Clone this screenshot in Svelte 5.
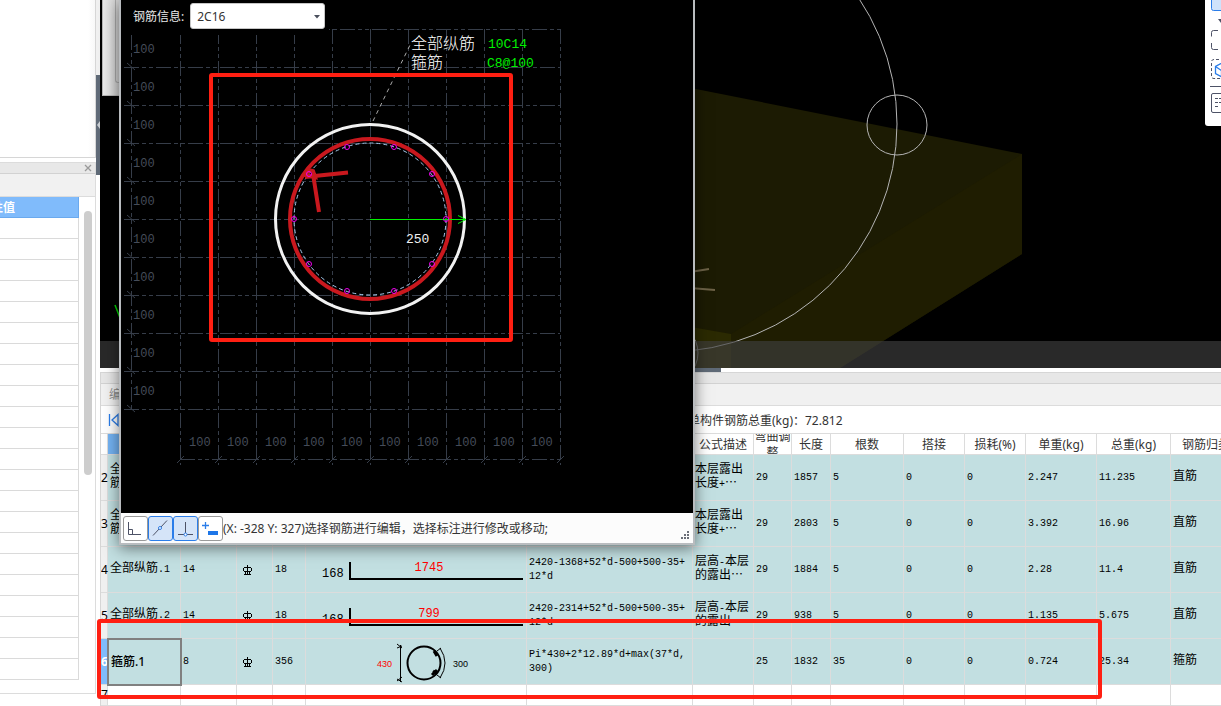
<script>
  const steps = Array.from({ length: 11 }, (_, i) => i);
  const bars = Array.from({ length: 10 }, (_, i) => {
    const a = (i * Math.PI) / 5;
    return { x: Math.round(370.4 + 76 * Math.cos(a)), y: Math.round(219 + 76 * Math.sin(a)) };
  });
  const propertyRows = Array.from({ length: 22 }, (_, i) => i);

  const columns = [
    { key: 'name', label: '', width: 73 },
    { key: 'dia', label: '', width: 56 },
    { key: 'grade', label: '', width: 36 },
    { key: 'shapeNo', label: '', width: 33 },
    { key: 'shape', label: '', width: 221 },
    { key: 'formula', label: '', width: 166 },
    { key: 'note', label: '公式描述', width: 61 },
    { key: 'bend', label: '弯曲调整', width: 38 },
    { key: 'length', label: '长度', width: 39 },
    { key: 'count', label: '根数', width: 73 },
    { key: 'lap', label: '搭接', width: 61 },
    { key: 'loss', label: '损耗(%)', width: 61 },
    { key: 'unit', label: '单重(kg)', width: 71 },
    { key: 'total', label: '总重(kg)', width: 74 },
    { key: 'kind', label: '钢筋归类', width: null }
  ];

  const rows = [
    { no: 2, name: '全部纵筋插筋.1', note: '本层露出长度+⋯', bend: '29', length: '1857', count: '5', lap: '0', loss: '0', unit: '2.247', total: '11.235', kind: '直筋' },
    { no: 3, name: '全部纵筋插筋.2', note: '本层露出长度+⋯', bend: '29', length: '2803', count: '5', lap: '0', loss: '0', unit: '3.392', total: '16.96', kind: '直筋' },
    { no: 4, name: '全部纵筋.1', dia: '14', grade: 'C', shapeNo: '18', shape: { hook: '168', run: '1745' }, formula: '2420-1368+52*d-500+500-35+12*d', note: '层高-本层的露出⋯', bend: '29', length: '1884', count: '5', lap: '0', loss: '0', unit: '2.28', total: '11.4', kind: '直筋' },
    { no: 5, name: '全部纵筋.2', dia: '14', grade: 'C', shapeNo: '18', shape: { hook: '168', run: '799' }, formula: '2420-2314+52*d-500+500-35+12*d', note: '层高-本层的露出⋯', bend: '29', length: '938', count: '5', lap: '0', loss: '0', unit: '1.135', total: '5.675', kind: '直筋' },
    { no: 6, selected: true, name: '箍筋.1', dia: '8', grade: 'C', shapeNo: '356', shape: { ring: '430', lap: '300' }, formula: 'Pi*430+2*12.89*d+max(37*d,300)', note: '', bend: '25', length: '1832', count: '35', lap: '0', loss: '0', unit: '0.724', total: '25.34', kind: '箍筋' }
  ];

  function split(text) {
    return (text ?? '').match(/[\u2e80-\uffef⋯]+|[^\u2e80-\uffef⋯]+/g) ?? [];
  }
</script>

{#snippet mixed(text)}
  {#each split(text) as part}<span class={/[\u2e80-\uffef⋯]/.test(part) ? 'cn' : 'mono'}>{part}</span>{/each}
{/snippet}

<div class="app">
  <aside class="side">
    <div class="preview"></div>
    <section class="props">
      <header class="props-head">
        <button class="close" aria-label="关闭">
          <svg width="8" height="8" viewBox="0 0 8 8"><path d="M1 1l6 6M7 1l-6 6" stroke="#9a9a9a" stroke-width="1.3" /></svg>
        </button>
      </header>
      <div class="props-tabs"></div>
      <div class="props-body">
        <div class="props-list">
          <div class="props-title"><span>性值</span></div>
          {#each propertyRows as r (r)}<div class="props-row"></div>{/each}
        </div>
        <div class="scroll"><div class="thumb"></div></div>
      </div>
    </section>
  </aside>

  <div class="vsplit">
    <div class="handle">
      <svg width="4" height="8" viewBox="0 0 4 8"><path d="M4 0v8L1 4z" fill="#c9ced3" /></svg>
    </div>
  </div>

  <main class="work">
    <div class="view">
      <svg class="scene" width="1121" height="368" viewBox="100 0 1121 368">
        <path d="M560 62L1022 154V254L840 368H560z" fill="#1c1b03" />
        <path d="M1022 154V254L840 368H731V334z" fill="#1f1d01" />
        <path d="M600 311L731 334V368H600z" fill="#2b2a02" />
        <ellipse cx="667" cy="124" rx="230" ry="228" fill="none" stroke="#b4b4b4" />
        <circle cx="897" cy="125" r="30" fill="none" stroke="#b4b4b4" />
        <circle cx="668" cy="353" r="30" fill="none" stroke="#b4b4b4" />
        <path d="M690 272L709 269M690 288L715 290" stroke="#6d6247" stroke-width="2" />
        <path d="M115 305l7 18" stroke="#00d800" stroke-width="1.5" />
        <rect x="100" y="341" width="1121" height="27" fill="#3f3f3f" fill-opacity="0.65" />
      </svg>
      <div class="back-panel"><div></div></div>
      <div class="palette">
        <svg width="16" height="126" viewBox="1205 0 16 126" fill="none">
          <path d="M1211.500 -2V8.500Q1211.500 10.500 1213.500 10.500H1224V-2z" fill="#cfe2fb" stroke="#2b7de9" />
          <path d="M1218 19h6l-3 4z" fill="#4d5266" />
          <path d="M1218 30.500h-4.500q-2 0-2 2v4M1211.500 43v4.500q0 2 2 2h4.500" stroke="#4d5266" />
          <path d="M1224 59.500h-10q-2.500 0-2.500 2.500v14q0 2.500 2.500 2.500h10" stroke="#4d5266" stroke-dasharray="3 2" />
          <path d="M1224 62l-8.500 4.500v7l8.500 4.500M1215.500 66.500l6 4V77" stroke="#2b7de9" stroke-width="1.300" />
          <path d="M1210 86.500h12" stroke="#4d5266" />
          <path d="M1224 93.500h-11q-1.500 0-1.500 1.500v16q0 1.500 1.500 1.500h11" stroke="#4d5266" />
          <path d="M1215 98.500h3M1219 98.500h3M1215 102.500h3M1219 102.500h3M1215 106.500h3" stroke="#4d5266" />
        </svg>
      </div>
    </div>

    <div class="hsplit"><div></div></div>

    <section class="editor">
      <div class="editor-head"></div>
      <div class="editor-tab">编辑钢筋</div>
      <div class="editor-tools">
        <button class="first" aria-label="第一条">
          <svg width="12" height="14" viewBox="0 0 12 14" fill="none" stroke="#2b7de9" stroke-width="1.300"><path d="M1.500 1v12M10 1.500L4 7l6 5.500z" /></svg>
        </button>
        <span class="sum">单构件钢筋总重(kg)：72.812</span>
      </div>
      <div class="table-wrap">
        <table>
          <colgroup>
            <col style:width="7px" />
            {#each columns as c (c.key)}<col style:width={c.width ? c.width + 'px' : 'auto'} />{/each}
          </colgroup>
          <thead>
            <tr>
              <th></th>
              {#each columns as c (c.key)}
                <th class={{ active: c.key === 'name' }}><div class="th">{c.label}</div></th>
              {/each}
            </tr>
          </thead>
          <tbody>
            {#each rows as r (r.no)}
              <tr class={{ selected: r.selected }}>
                <th scope="row"><span>{r.no}</span></th>
                {#each columns as c (c.key)}
                  {#if c.key === 'grade'}
                    <td class="mid">
                      {#if r.grade}
                        <svg width="11" height="10" viewBox="0 0 11 10" fill="none" stroke="#000"><path d="M5.500 0v10M2 2.500h7M2 6.500h7M1.500 3v3M9.500 3v3M3.500 6v3M7.500 6v3M2 9.500h7" /></svg>
                      {/if}
                    </td>
                  {:else if c.key === 'shape'}
                    <td class="shape">
                      {#if r.shape?.hook}
                        <svg width="220" height="45" viewBox="306 547 220 45">
                          <path d="M350 562V579H523" fill="none" stroke="#000" stroke-width="2" />
                          <text class="dim" x="322" y="577">{r.shape.hook}</text>
                          <text class="dim red" x="429" y="571" text-anchor="middle">{r.shape.run}</text>
                        </svg>
                      {:else if r.shape?.ring}
                        <svg width="220" height="45" viewBox="306 639 220 45" fill="none" stroke="#000">
                          <path d="M400.500 645V682M397 644l5 4M397 648l5-2M397 679l5 3M397 681l5-4" />
                          <circle cx="424" cy="663" r="16.500" stroke-width="2" />
                          <path d="M434 651l3 5M433 671l4 3M432 675l5-5" stroke-width="3" />
                          <path d="M437 651l4-3M437 675l4 3M440 648q10 15 0 30" />
                          <text class="tiny red" x="377" y="667">{r.shape.ring}</text>
                          <text class="tiny" x="453" y="667">{r.shape.lap}</text>
                        </svg>
                      {/if}
                    </td>
                  {:else if c.key === 'name' && r.selected}
                    <td class="current">{r.name}</td>
                  {:else}
                    <td>{@render mixed(r[c.key])}</td>
                  {/if}
                {/each}
              </tr>
            {/each}
            <tr class="blank">
              <th scope="row"><span>7</span></th>
              {#each columns as c (c.key)}<td></td>{/each}
            </tr>
          </tbody>
        </table>
      </div>
    </section>
  </main>

  <section class="dialog">
    <div class="canvas">
      <svg width="572" height="513" viewBox="121 0 572 513" fill="none">
        <g stroke="#363d49" stroke-dasharray="15 3 4 3 4 3">
          {#each steps as i (i)}
            <path d="M{180.5 + 38 * i} 29V465" />
            <path d="M{i ? 124 : 180} {29.5 + 38 * i}H560" />
          {/each}
          <path d="M131.500 35V409M180 459.500H560" />
        </g>
        <g stroke="#363d49">
          {#each steps as i (i)}
            <path d="M{177 + 38 * i} 463l7-7" />
            {#if i}<path d="M127 {25 + 38 * i}l8 7" />{/if}
          {/each}
        </g>
        <g class="ruler">
          {#each steps.slice(0, 10) as i (i)}
            <text x="133" y={53 + 38 * i}>100</text>
            <text x={189 + 38 * i} y="446">100</text>
          {/each}
        </g>
        <path d="M373 121L411 43" stroke="#aaa" stroke-dasharray="4 4" />
        <circle cx="370" cy="219" r="94.500" stroke="#f2f2f2" stroke-width="3" />
        <circle cx="370" cy="219" r="76" stroke="#a9cdf0" stroke-dasharray="4 3" />
        <circle cx="370" cy="219" r="80" stroke="#c9181e" stroke-width="4" />
        <path d="M305 175q3-6 8-4l2 6zM305 177L348 172.500M313 174L319 212" stroke="#c9181e" stroke-width="4" />
        <path d="M370 219.500H465M458 215.500l8 4l-8 4" stroke="#00f000" />
        {#each bars as b}
          <circle cx={b.x} cy={b.y} r="2.500" stroke="#f000f0" />
        {/each}
        <text class="label white" x="406" y="243">250</text>
        <text class="label-cn" x="411" y="49">全部纵筋</text>
        <text class="label-cn" x="411" y="68">箍筋</text>
        <text class="label green" x="488" y="48">10C14</text>
        <text class="label green" x="487" y="67">C8@100</text>
      </svg>
      <div class="info">
        <label for="rebar">钢筋信息:</label>
        <div class="combo">
          <select id="rebar"><option>2C16</option></select>
          <svg width="6" height="4" viewBox="0 0 6 4"><path d="M0 0h6L3 3.500z" fill="#4a4f5c" /></svg>
        </div>
      </div>
    </div>
    <footer class="status">
      <button aria-label="正交">
        <svg width="23" height="23" viewBox="0 0 23 23" fill="none" stroke="#4d5266"><path d="M4.500 5v12.500H17M4.500 12.500h4v5" /></svg>
      </button>
      <button class="on" aria-label="中点">
        <svg width="23" height="23" viewBox="0 0 23 23" fill="none"><path d="M4 18.500L18 3.500" stroke="#4d5266" /><circle cx="11" cy="11" r="1.500" fill="#fff" stroke="#2b7de9" /></svg>
      </button>
      <button class="on" aria-label="垂点">
        <svg width="23" height="23" viewBox="0 0 23 23" fill="none"><path d="M11.500 5v12M4 17.500h15" stroke="#4d5266" /><circle cx="11.500" cy="17.500" r="1.500" fill="#fff" stroke="#2b7de9" /></svg>
      </button>
      <button aria-label="动态输入">
        <svg width="23" height="23" viewBox="0 0 23 23" fill="none"><path d="M3 8.500h7M6.500 5v7" stroke="#2b7de9" stroke-width="1.300" /><rect x="9" y="14" width="10" height="4" fill="#1d76e8" /></svg>
      </button>
      <span>(X: -328 Y: 327)选择钢筋进行编辑，选择标注进行修改或移动;</span>
      <svg class="grip" width="9" height="9" viewBox="0 0 9 9" fill="#6b6f78"><path d="M6 0h2v2H6zM3 3h2v2H3zM6 3h2v2H6zM0 6h2v2H0zM3 6h2v2H3zM6 6h2v2H6z" /></svg>
    </footer>
  </section>

  <div class="mark mark-section"></div>
  <div class="mark mark-row"></div>
</div>

<style>
  :global(body) {
    overflow: hidden;
  }
  .app {
    position: relative;
    display: grid;
    grid-template-columns: 96px 4px 1fr;
    height: 100vh;
    overflow: hidden;
    background: #fff;
    color: #333;
    font: 12px/16px 'Noto Sans', 'Noto Sans CJK SC', sans-serif;
  }
  .app * {
    box-sizing: border-box;
  }
  svg {
    display: block;
    flex: none;
  }
  button {
    display: flex;
    align-items: center;
    justify-content: center;
    padding: 0;
    border: 0;
    background: none;
  }

  .side {
    display: flex;
    flex-direction: column;
    gap: 4px;
    min-height: 0;
    padding-bottom: 12px;
  }
  .preview {
    flex: none;
    height: 158px;
    border: solid #d6d6d6;
    border-width: 0 1px 1px 0;
    background: linear-gradient(90deg, #fff 88px, #f8f8f8);
  }
  .props {
    display: flex;
    flex: 1;
    flex-direction: column;
    min-height: 0;
    border: solid #dcdcdc;
    border-width: 1px 1px 1px 0;
  }
  .props-head {
    display: flex;
    flex: none;
    justify-content: flex-end;
    height: 11px;
    padding-right: 3px;
    border-bottom: 1px solid #d2d2d2;
    background: #e8e8e8;
  }
  .props-tabs {
    flex: none;
    height: 23px;
    border-bottom: 1px solid #dcdcdc;
    background: #f1f1f1;
  }
  .props-body {
    display: flex;
    flex: 1;
    min-height: 0;
    overflow: hidden;
  }
  .props-list {
    flex: 1;
  }
  .props-title,
  .props-row {
    height: 21px;
    border: solid #dadada;
    border-width: 0 1px 1px 0;
  }
  .props-title {
    display: flex;
    align-items: center;
    padding-top: 2px;
    border-color: #6aa9ee;
    background: #80bbfb;
    color: #fff;
    font-weight: 700;
  }
  .props-title span {
    margin-left: -9px;
  }
  .scroll {
    width: 16px;
    padding: 14px 3px 0 5px;
  }
  .thumb {
    height: 264px;
    border-radius: 4px;
    background: #cdcdcd;
  }

  .vsplit {
    padding-top: 75px;
    background: linear-gradient(#f0f0f0 75px, #fff 75px);
  }
  .handle {
    display: flex;
    align-items: center;
    height: 100px;
    background: #5f6a77;
  }

  .work {
    display: flex;
    flex-direction: column;
    min-width: 0;
    min-height: 0;
  }
  .view {
    position: relative;
    flex: none;
    overflow: hidden;
    background: #000;
  }
  .back-panel {
    position: absolute;
    top: 0;
    left: 2px;
    width: 60px;
    height: 96px;
    padding: 0 0 12px 12px;
    border: 1px solid #b4b4b4;
    border-top: 0;
    background: linear-gradient(90deg, #e9e9e9, #c8c8c8 20px);
  }
  .back-panel div {
    height: 100%;
    border: solid #aaa;
    border-width: 0 0 1px 1px;
    border-radius: 0 0 0 3px;
    background: #d2d2d2;
  }
  .palette {
    position: absolute;
    top: 0;
    right: 0;
    border-bottom-left-radius: 3px;
    background: #fff;
    overflow: hidden;
  }
  .hsplit {
    display: flex;
    flex: none;
    justify-content: center;
    height: 4px;
  }
  .hsplit div {
    width: 120px;
    background: #5f6a77;
  }

  .editor {
    flex: 1;
    min-height: 0;
    overflow: hidden;
    border: solid #d6d6d6;
    border-width: 1px 0 0 1px;
  }
  .editor-head {
    height: 11px;
    border-bottom: 1px solid #d2d2d2;
    background: #e7e7e7;
  }
  .editor-tab {
    height: 22px;
    padding-left: 8px;
    border-bottom: 1px solid #dcdcdc;
    background: #f1f1f1;
    color: #8a8a8a;
    line-height: 22px;
  }
  .editor-tools {
    display: flex;
    align-items: center;
    height: 28px;
    padding-left: 7px;
    border-bottom: 1px solid #dcdcdc;
  }
  .sum {
    margin-left: 568px;
    padding-top: 2px;
    white-space: nowrap;
  }
  .table-wrap {
    overflow: hidden;
  }
  table {
    width: 100%;
    min-width: 1141px;
    table-layout: fixed;
    border-spacing: 0;
  }
  th,
  td {
    height: 46px;
    padding: 0 2px 3px;
    border: solid #dcdcdc;
    border-width: 0 1px 1px 0;
    color: #000;
    font-weight: 400;
    line-height: 14px;
    text-align: left;
    vertical-align: middle;
    word-break: break-all;
  }
  td {
    background: #c2dfe1;
  }
  thead th {
    height: 21px;
    padding: 0;
    color: #333;
    text-align: center;
  }
  .th {
    display: flex;
    align-items: center;
    justify-content: center;
    height: 20px;
    padding-top: 1px;
    overflow: hidden;
    line-height: 16px;
  }
  th.active {
    background: #74b3f3;
  }
  tbody th {
    padding: 0;
    background: #f0f0f0;
    white-space: nowrap;
  }
  .selected th {
    background: #80bbfb;
    color: #fff;
    font-weight: 700;
  }
  .blank th,
  .blank td {
    height: 21px;
  }
  .blank td {
    background: #fff;
  }
  td.mid {
    padding: 0 5px;
  }
  td.shape {
    padding: 0;
  }
  td.current {
    outline: 2px solid #808080;
    outline-offset: -1px;
    padding: 0 3px;
    font-weight: 500;
  }
  .cn {
    font-family: 'Noto Sans CJK SC', sans-serif;
    line-height: 10px;
  }
  .mono {
    font: 10px/8px 'Liberation Mono', monospace;
  }
  .dim {
    fill: #000;
    stroke: none;
    font: 12px 'Liberation Mono', monospace;
  }
  .tiny {
    fill: #000;
    stroke: none;
    font: 9px 'Liberation Sans', sans-serif;
  }
  text.red {
    fill: #f00;
  }

  .dialog {
    position: absolute;
    top: 0;
    left: 119px;
    width: 576px;
    border: solid #b9bcbf;
    border-width: 0 2px 2px;
    background: #fcfcfc;
    box-shadow: 0 3px 14px rgba(0, 0, 0, 0.5);
  }
  .canvas {
    position: relative;
    background: #000;
  }
  .info {
    position: absolute;
    top: 0;
    left: 0;
    display: flex;
    align-items: center;
    gap: 6px;
    padding: 3px 4px 6px 12px;
    background: #000;
    color: #e8e8e8;
  }
  .info label {
    padding-top: 2px;
  }
  .combo {
    position: relative;
  }
  .combo svg {
    position: absolute;
    top: 12px;
    right: 5px;
  }
  select {
    display: block;
    width: 135px;
    height: 26px;
    padding: 1px 6px 0;
    border: 1px solid #c6c6c6;
    border-radius: 3px;
    appearance: none;
    background: #fff;
    color: #333;
    font: inherit;
  }
  .ruler text {
    fill: #454c59;
    font: 12px 'Liberation Mono', monospace;
  }
  .label {
    font: 13px 'Liberation Mono', monospace;
  }
  .white {
    fill: #f0f0f0;
  }
  .green {
    fill: #00f000;
  }
  .label-cn {
    fill: #fff;
    font: 300 16px 'Noto Sans CJK SC', sans-serif;
  }
  .status {
    display: flex;
    align-items: center;
    height: 30px;
    padding: 0 3px 0 2px;
    white-space: nowrap;
  }
  .status span {
    padding-top: 2px;
  }
  .status button {
    width: 25px;
    height: 25px;
    border: 1px solid #999;
    border-radius: 3px;
    background: #fff;
  }
  .status button.on {
    border-color: #2b7de9;
    background: #d5e4f8;
  }
  .grip {
    align-self: flex-end;
    margin: 0 0 3px auto;
  }

  .mark {
    position: absolute;
    border: 4px solid #ff1f12;
    border-radius: 3px;
    pointer-events: none;
  }
  .mark-section {
    top: 73px;
    left: 209px;
    width: 304px;
    height: 269px;
  }
  .mark-row {
    top: 619px;
    left: 97px;
    width: 1005px;
    height: 80px;
  }
</style>
